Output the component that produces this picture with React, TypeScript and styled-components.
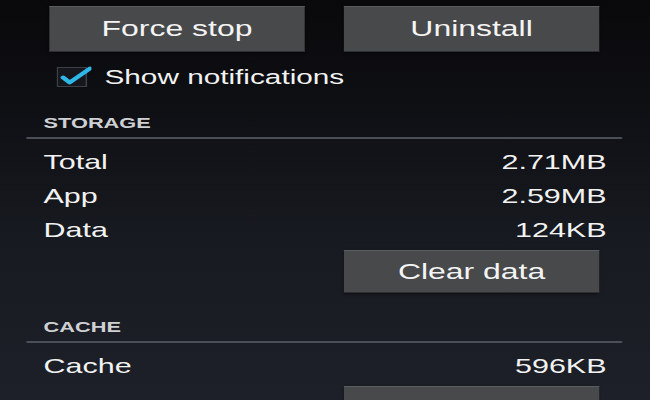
import React from "react";
import styled, { createGlobalStyle } from "styled-components";

// the reference is a phone screen stretched sideways, so the layout is built
// at phone width and widened with one scaleX on the frame
const STRETCH = 1.451;

const GlobalStyle = createGlobalStyle`
  html, body {
    margin: 0;
    padding: 0;
    height: 400px;
    overflow: hidden;
    background: linear-gradient(180deg, #09090b 0%, #0e0f13 25%, #171a20 60%, #1d2028 100%);
  }
`;

const Frame = styled.div`
  width: 448px;
  height: 400px;
  padding-top: 6px;
  box-sizing: border-box;
  transform: scaleX(${STRETCH});
  transform-origin: 0 0;
  font-family: "Liberation Sans", Arial, sans-serif;
  color: #f2f2f2;
  overflow: hidden;
`;

const ButtonRow = styled.div<{ $single?: boolean }>`
  display: flex;
  justify-content: ${(p) => (p.$single ? "flex-end" : "flex-start")};
  gap: 27px;
  padding: 0 35px 0 34px;
`;

const Button = styled.button<{ $h?: number }>`
  width: 176px;
  height: ${(p) => p.$h || 46}px;
  padding: 0;
  border: none;
  border-top: 1px solid #5c5d60;
  border-bottom: 1px solid #2e2f32;
  background: #48494b;
  color: #f4f4f4;
  font-family: inherit;
  font-size: 22px;
  box-shadow: 0 1px 2px rgba(0, 0, 0, 0.6);
`;

const CheckRow = styled.label`
  display: flex;
  align-items: center;
  height: 24px;
  margin-top: 13px;
  padding-left: 39px;
  gap: 9px;
  font-size: 20.5px;
`;

const SectionLabel = styled.div<{ $top?: number }>`
  margin-top: ${(p) => p.$top || 25}px;
  padding-left: 30px;
  height: 18px;
  line-height: 18px;
  font-size: 15px;
  font-weight: bold;
  color: #cfd0d3;
`;

const Divider = styled.div`
  height: 2px;
  margin: 5px 19px 6px 18px;
  background: #4b4f58;
  border-radius: 1px;
`;

const Row = styled.div`
  display: flex;
  justify-content: space-between;
  align-items: center;
  height: 34px;
  padding: 0 30px;
  font-size: 21px;
`;

const Spacer = styled.div<{ $h: number }>`
  height: ${(p) => p.$h}px;
`;

const CheckBox = () => (
  <svg width="24" height="22" viewBox="0 0 24 22">
    <rect x="0.5" y="1.5" width="20" height="19" fill="#15171c" stroke="#3d4048" />
    <path
      d="M4.5 11.5 L9 16.5 L23 2.5"
      fill="none"
      stroke="#2fb7e8"
      strokeWidth="3.6"
      strokeLinecap="round"
      strokeLinejoin="round"
    />
  </svg>
);

const storage = [
  { name: "Total", size: "2.71MB" },
  { name: "App", size: "2.59MB" },
  { name: "Data", size: "124KB" },
];

export default function App() {
  return (
    <>
      <GlobalStyle />
      <Frame>
        <ButtonRow>
          <Button>Force stop</Button>
          <Button>Uninstall</Button>
        </ButtonRow>
        <CheckRow>
          <CheckBox />
          Show notifications
        </CheckRow>

        <SectionLabel>STORAGE</SectionLabel>
        <Divider />
        {storage.map((r) => (
          <Row key={r.name}>
            <span>{r.name}</span>
            <span>{r.size}</span>
          </Row>
        ))}
        <Spacer $h={3} />
        <ButtonRow $single>
          <Button $h={43}>Clear data</Button>
        </ButtonRow>

        <SectionLabel>CACHE</SectionLabel>
        <Divider />
        <Row>
          <span>Cache</span>
          <span>596KB</span>
        </Row>
        <Spacer $h={3} />
        <ButtonRow $single>
          {/* label sits below the fold in the screenshot */}
          <Button $h={43} aria-label="Clear cache" />
        </ButtonRow>
      </Frame>
    </>
  );
}
